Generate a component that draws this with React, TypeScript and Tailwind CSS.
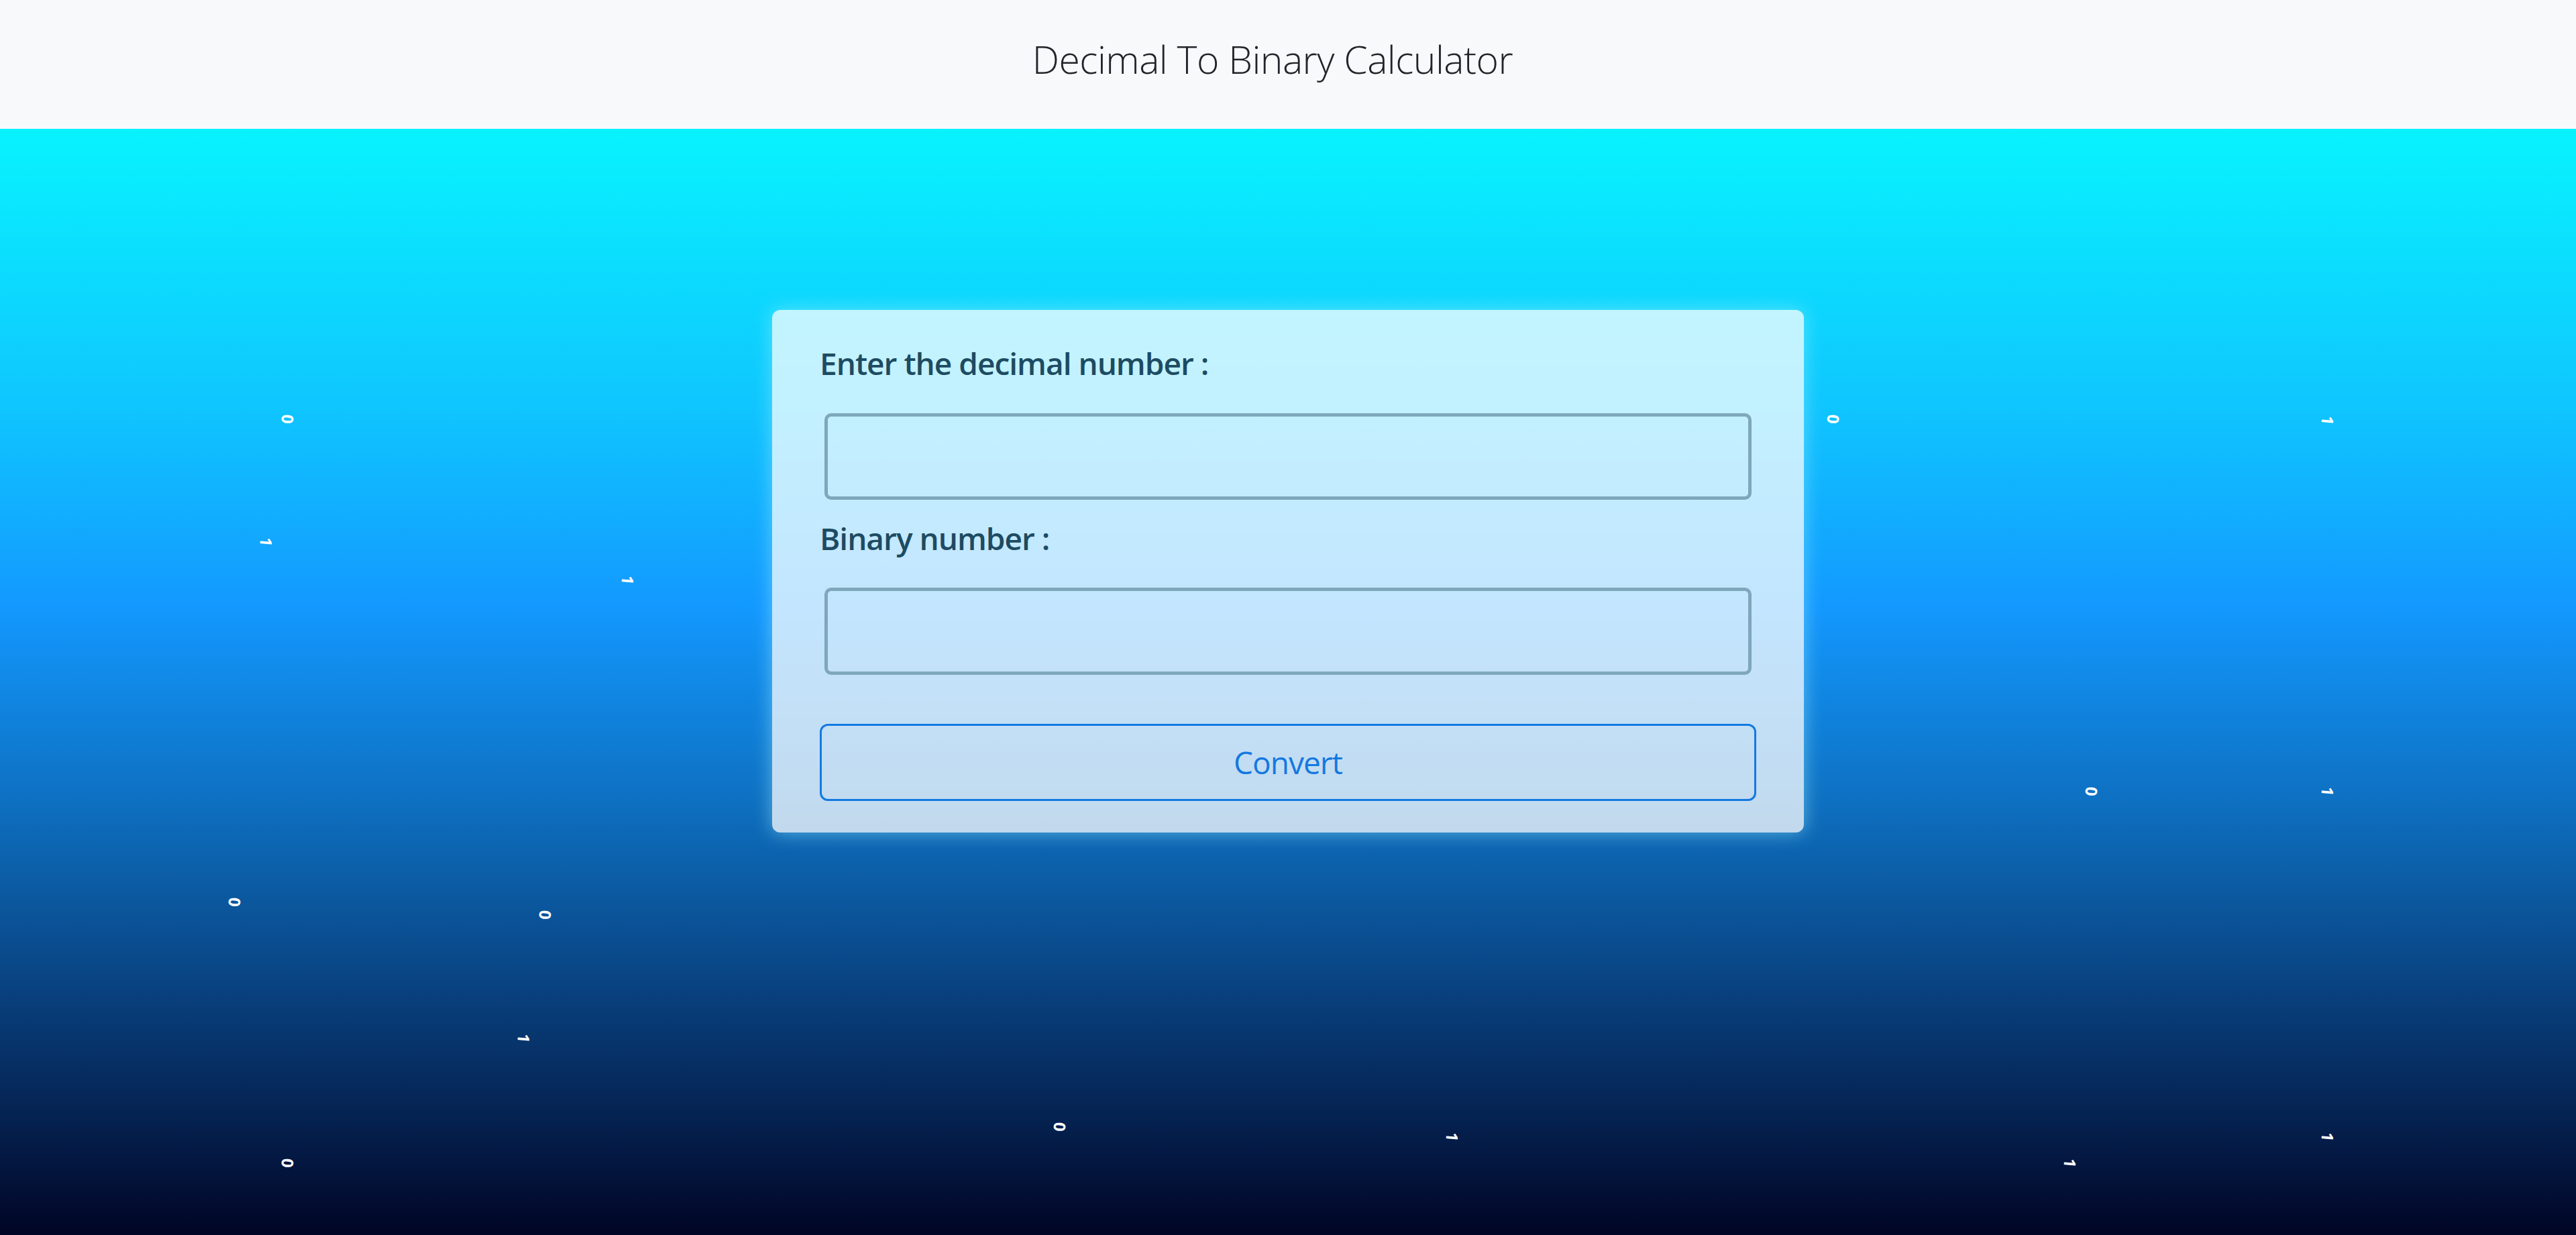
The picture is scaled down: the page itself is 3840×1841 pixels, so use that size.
import React from "react";

const bits: { ch: string; x: number; y: number }[] = [
  { ch: "0", x: 429, y: 625 },
  { ch: "1", x: 397, y: 808 },
  { ch: "1", x: 936, y: 865 },
  { ch: "0", x: 2733, y: 625 },
  { ch: "1", x: 3470, y: 627 },
  { ch: "0", x: 3118, y: 1180 },
  { ch: "1", x: 3470, y: 1180 },
  { ch: "0", x: 350, y: 1345 },
  { ch: "0", x: 813, y: 1364 },
  { ch: "1", x: 781, y: 1548 },
  { ch: "0", x: 1580, y: 1680 },
  { ch: "1", x: 2165, y: 1695 },
  { ch: "0", x: 429, y: 1734 },
  { ch: "1", x: 3086, y: 1734 },
  { ch: "1", x: 3470, y: 1695 },
];

export default function App() {
  return (
    <div
      className="relative w-full h-[1841px] overflow-hidden flex flex-col"
      style={{ fontFamily: '"Open Sans", "Noto Sans", sans-serif' }}
    >
      <header className="h-[192px] shrink-0 bg-[#f8f9fa] flex items-center justify-center pr-[46px] pb-[14px]">
        <h1 className="text-[57px] font-light text-[#212529] tracking-[-0.5px]">
          Decimal To Binary Calculator
        </h1>
      </header>
      <main className="flex-1 bg-[linear-gradient(to_bottom,#08f3fe_0%,#0fc6fe_25%,#1399ff_43%,#0e72c4_60%,#0a4c8e_74%,#062b5e_86%,#010525_100%)] flex flex-col items-center">
        <div className="mt-[270px] w-[1538px] rounded-[12px] bg-white/75 shadow-[0_0_28px_rgba(160,240,255,0.55)] pt-[51px] pb-[47px] px-[71px] flex flex-col">
          <label className="text-[46px] leading-[56px] font-semibold text-[#1d4b62] tracking-[-1px]">
            Enter the decimal number :
          </label>
          <div className="mt-[47px] ml-[7px] w-[1382px] h-[129px] rounded-[10px] border-[5px] border-[#7fa7bc]" />
          <label className="mt-[29px] text-[46px] leading-[56px] font-semibold text-[#1d4b62] tracking-[-1px]">
            Binary number :
          </label>
          <div className="mt-[46px] ml-[7px] w-[1382px] h-[130px] rounded-[10px] border-[5px] border-[#7fa7bc]" />
          <button className="mt-[73px] h-[115px] w-full rounded-[12px] border-[3px] border-[#1479e0] text-[#1479e0] text-[46px] tracking-[-1px]">
            Convert
          </button>
        </div>
      </main>
      {bits.map((b, i) => (
        <span
          key={i}
          className="absolute text-white font-bold text-[24px] leading-none rotate-[95deg] select-none"
          style={{ left: b.x - 7, top: b.y - 12 }}
        >
          {b.ch}
        </span>
      ))}
    </div>
  );
}
